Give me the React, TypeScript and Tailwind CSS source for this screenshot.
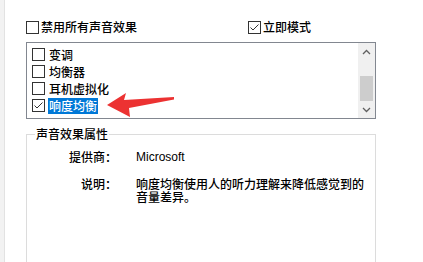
import React from 'react';

const cjk = "font-['Noto_Sans_CJK_SC','Microsoft_YaHei',sans-serif]";

function CheckBox({ checked = false }: { checked?: boolean }) {
  return (
    <span className="w-[13px] h-[13px] border border-[#333333] bg-white flex items-center justify-center shrink-0">
      {checked && (
        <svg width="11" height="11" viewBox="0 0 11 11">
          <path d="M1.5 5.5 L4 8 L9.5 2.5" fill="none" stroke="#333333" strokeWidth="1" />
        </svg>
      )}
    </span>
  );
}

const effects = [
  { name: '变调', checked: false },
  { name: '均衡器', checked: false },
  { name: '耳机虚拟化', checked: false },
  { name: '响度均衡', checked: true, selected: true },
];

export default function App() {
  return (
    <div className={`w-[423px] h-[262px] bg-white flex overflow-hidden relative text-[12px] font-medium text-[#000000] ${cjk}`}>
      {/* left window edge */}
      <div className="w-[5px] h-full bg-[#f2f2f2] border-r border-[#e2e2e2]" />

      <div className="flex-1 pl-[21px] flex flex-col">
        {/* top options */}
        <div className="mt-[20px] h-[14px] flex items-center">
          <label className="w-[222px] flex items-center gap-[2px]">
            <CheckBox />
            <span className="leading-[14px]">禁用所有声音效果</span>
          </label>
          <label className="flex items-center gap-[2px]">
            <CheckBox checked />
            <span className="leading-[14px]">立即模式</span>
          </label>
        </div>

        {/* effects list */}
        <div className="mt-[8px] w-[350px] h-[77px] border border-[#828790] flex">
          <div className="flex-1 pt-[3px] pl-[5px]">
            {effects.map((e) => (
              <div key={e.name} className="h-[17px] flex items-center gap-[3px]">
                <CheckBox checked={e.checked} />
                <span
                  className={
                    e.selected
                      ? 'px-[1px] leading-[16px] bg-[#0078d7] text-white'
                      : 'px-[1px] leading-[16px]'
                  }
                >
                  {e.name}
                </span>
              </div>
            ))}
          </div>
          <div className="w-[17px] bg-[#f0f0f0] flex flex-col items-center">
            <div className="h-[17px] flex items-center justify-center">
              <svg width="9" height="6" viewBox="0 0 9 6">
                <path d="M1 5 L4.5 1.5 L8 5" fill="none" stroke="#606060" strokeWidth="1.3" />
              </svg>
            </div>
            <div className="mt-auto w-[13px] h-[25px] bg-[#cdcdcd]" />
            <div className="h-[17px] flex items-center justify-center">
              <svg width="9" height="6" viewBox="0 0 9 6">
                <path d="M1 1 L4.5 4.5 L8 1" fill="none" stroke="#606060" strokeWidth="1.3" />
              </svg>
            </div>
          </div>
        </div>

        {/* properties group */}
        <fieldset className="mt-[7px] w-[350px] flex-1 border border-b-0 border-[#dcdcdc] px-0">
          <legend className="ml-[8px] px-[1px] leading-[16px]">声音效果属性</legend>
          <div className="grid grid-cols-[90px_1fr] gap-x-[19px] mt-[8px]">
            <div className="text-right leading-[14px]">提供商：</div>
            <div className="leading-[14px] font-normal font-['Liberation_Sans',sans-serif]">Microsoft</div>
            <div className="text-right leading-[13px] mt-[13px]">说明：</div>
            <div className="w-[232px] leading-[13px] mt-[13px]">
              响度均衡使用人的听力理解来降低感觉到的音量差异。
            </div>
          </div>
        </fieldset>
      </div>

      {/* red pointer arrow */}
      <svg className="absolute left-0 top-0" width="423" height="262" viewBox="0 0 423 262">
        <polygon points="107,105 126,93 124,100 174,97 174,99.5 129,108 130,117" fill="#ec3232" />
      </svg>
    </div>
  );
}
